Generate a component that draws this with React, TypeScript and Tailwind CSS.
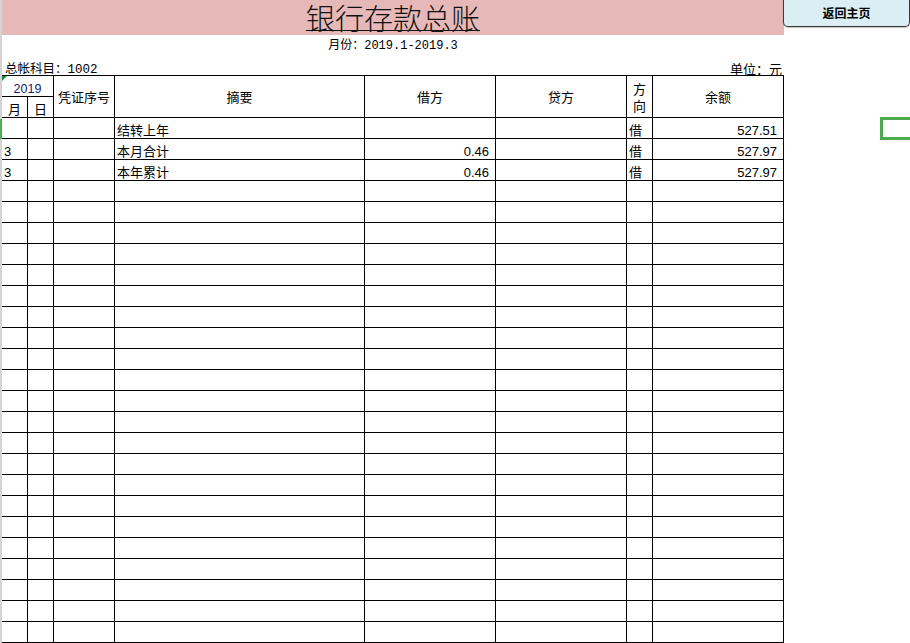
const colW = [
  "w-[26px]",
  "w-[26px]",
  "w-[61px]",
  "w-[250px]",
  "w-[131px]",
  "w-[131px]",
  "w-[26px]",
  "w-[131px]",
];

// 0 left, 1 right
const colAlign = [0, 0, 0, 0, 1, 1, 0, 1];

const data: string[][] = [
  ["", "", "", "结转上年", "", "", "借", "527.51"],
  ["3", "", "", "本月合计", "0.46", "", "借", "527.97"],
  ["3", "", "", "本年累计", "0.46", "", "借", "527.97"],
];

const rows = Array.from({ length: 25 }, (_, i) => data[i] ?? ["", "", "", "", "", "", "", ""]);

function HeadCell({ w, children }: { w: string; children: React.ReactNode }) {
  return (
    <div className={`${w} h-[42px] shrink-0 border-r border-b border-black flex items-center justify-center pt-[2px] text-[13px] leading-[17px] text-center`}>
      {children}
    </div>
  );
}

export default function App() {
  return (
    <div className="w-[910px] h-[643px] overflow-hidden bg-white flex font-['Liberation_Sans','Noto_Sans_CJK_SC',sans-serif] text-black">
      {/* sheet edge */}
      <div className="w-[2px] shrink-0 flex flex-col">
        <div className="h-[119px] bg-[#d4d4d4]" />
        <div className="h-[20px] bg-[#4caf50]" />
        <div className="flex-1 bg-[#d4d4d4]" />
      </div>

      <div className="w-[782px] shrink-0 flex flex-col">
        <div className="h-[35px] bg-[#e6b8b7] flex items-start justify-center">
          <span className="font-['Noto_Sans_CJK_SC',sans-serif] font-light text-[29px] leading-[34px] underline underline-offset-[0px] decoration-1 text-[#111]">
            银行存款总账
          </span>
        </div>

        <div className="h-[21px] flex items-end justify-center pb-[1px] text-[12px] leading-[16px] font-['Liberation_Mono','Noto_Sans_CJK_SC',monospace]">
          月份：2019.1-2019.3
        </div>

        <div className="h-[20px] flex items-end justify-between pl-[3px] pr-[2px] text-[12.5px] leading-[14px] font-['Liberation_Mono','Noto_Sans_CJK_SC',monospace]">
          <span className="-mb-[2px]">总帐科目：1002</span>
          <span className="-mb-[1px] font-['Noto_Sans_CJK_SC',sans-serif] text-[13px]">单位：元</span>
        </div>

        <div className="border-t border-black flex flex-col">
          <div className="flex">
            <div className="w-[52px] shrink-0 flex flex-col h-[42px]">
              <div className="relative h-[21px] border-r border-b border-black flex items-end justify-center text-[12.5px] leading-[14px] text-[#16216a]">
                <span className="absolute left-0 top-0 w-0 h-0 border-t-[5px] border-t-[#1e8c3a] border-r-[5px] border-r-transparent" />
                2019
              </div>
              <div className="flex h-[21px]">
                <div className="w-[26px] border-r border-b border-black flex items-end justify-center text-[13px] leading-[15px]">月</div>
                <div className="w-[26px] border-r border-b border-black flex items-end justify-center text-[13px] leading-[15px]">日</div>
              </div>
            </div>
            <HeadCell w={colW[2]}>凭证序号</HeadCell>
            <HeadCell w={colW[3]}>摘要</HeadCell>
            <HeadCell w={colW[4]}>借方</HeadCell>
            <HeadCell w={colW[5]}>贷方</HeadCell>
            <HeadCell w={colW[6]}>
              方<br />向
            </HeadCell>
            <HeadCell w={colW[7]}>余额</HeadCell>
          </div>

          {rows.map((r, i) => (
            <div key={i} className="flex">
              {r.map((v, j) => (
                <div
                  key={j}
                  className={`${colW[j]} h-[21px] shrink-0 border-r border-b border-black flex items-end text-[13px] leading-[14px] whitespace-nowrap ${
                    colAlign[j] ? "justify-end pr-[6px]" : "justify-start pl-[2px]"
                  }`}
                >
                  {v}
                </div>
              ))}
            </div>
          ))}
        </div>
      </div>

      <div className="relative flex-1">
        <button className="-ml-px w-[127px] h-[27px] bg-[#daeef3] border border-t-0 border-[#3c3c3c] rounded-b-[5px] shadow-[0_1px_1px_rgba(0,0,0,0.25)] flex items-center justify-center text-[12px] font-bold font-['Noto_Sans_CJK_SC',sans-serif]">
          返回主页
        </button>
        <div className="absolute left-[96px] top-[117px] w-[40px] h-[23px] border-[3px] border-[#4caa4c]" />
      </div>
    </div>
  );
}
